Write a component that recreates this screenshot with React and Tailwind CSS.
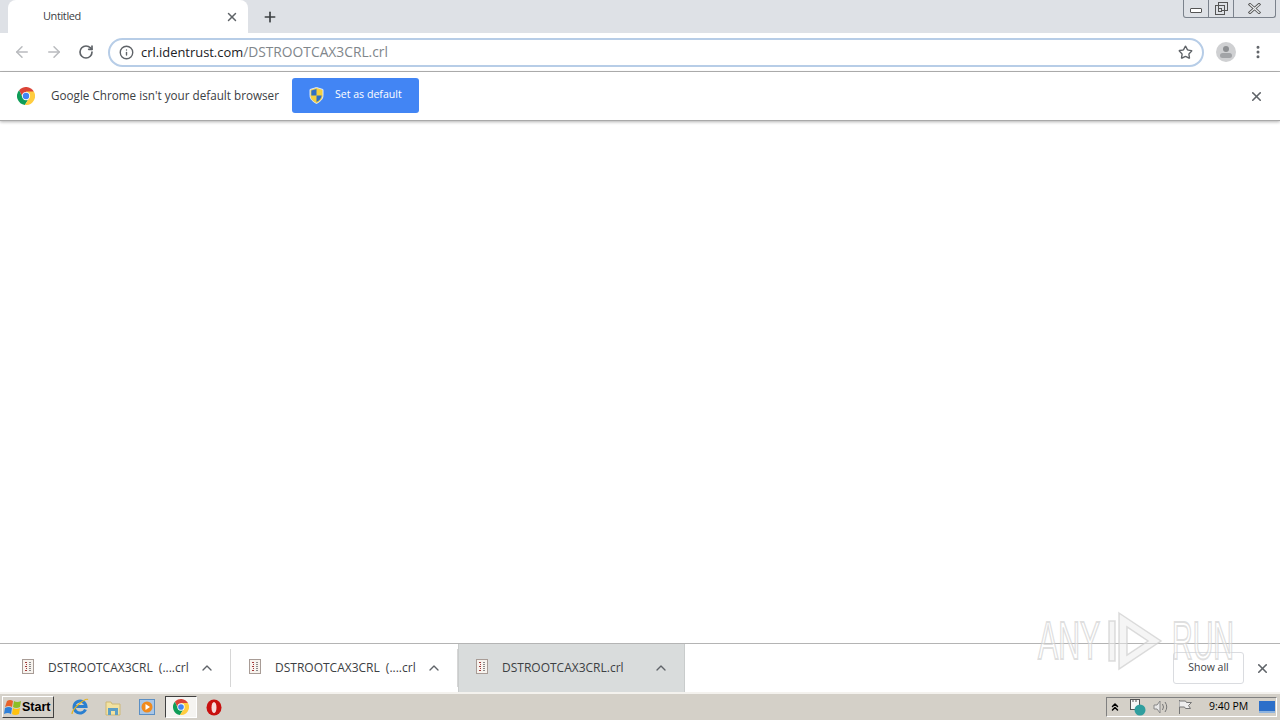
import { ArrowLeft, ArrowRight, RotateCw, Info, Star, X, Plus, ChevronUp, ChevronsUp, EllipsisVertical } from 'lucide-react';

const ChromeLogo = ({ size = 18 }) => (
    <svg width={size} height={size} viewBox="0 0 48 48">
        <path d="M24 24 L44.8 12 A24 24 0 0 0 5.6 8.600 L14 26z" fill="#db4437" />
        <path d="M24 24 L14 26 L5.600 8.600 A24 24 0 0 0 21 47.800 L32 30z" fill="#0f9d58" />
        <path d="M24 24 L32 30 L21 47.800 A24 24 0 0 0 44.800 12 L24 12z" fill="#ffcd40" />
        <circle cx="24" cy="24" r="11" fill="#fff" />
        <circle cx="24" cy="24" r="8.500" fill="#4285f4" />
    </svg>
);

const FileIcon = () => (
    <svg width="14" height="16" viewBox="0 0 14 16">
        <rect x="1.500" y="0.500" width="11" height="14" fill="#f7f3ee" stroke="#a89c96" />
        <path d="M4 3.500h2M5 5.500h1M4 7.500h2M5 9.500h1M4 11.500h2" stroke="#a33b3b" strokeWidth="1" />
        <path d="M8 3.500h2M8 5.500h2M8 7.500h2M8 9.500h2M8 11.500h2" stroke="#8b8b8b" strokeWidth="1" />
    </svg>
);

const Shield = () => (
    <svg width="15" height="17" viewBox="0 0 15 17">
        <path d="M7.500 0.500 L14 2.500 V8.500 C14 12.500 10.500 15 7.500 16.500 C4.500 15 1 12.500 1 8.500 V2.500z" fill="#f4d03f" stroke="#dbe7fb" />
        <path d="M7.500 2 V8.500 H2.300 V3.500z" fill="#2f6fc4" />
        <path d="M7.500 8.500 H12.700 C12.400 11.800 10 13.800 7.500 15z" fill="#2f6fc4" />
    </svg>
);

const DownloadItem = ({ name, active, first }) => (
    <div className={`h-full flex items-center pr-[15px] ${first ? 'w-[231px] pl-[21px]' : active ? 'w-[227px] pl-[16px]' : 'w-[227px] pl-[17px]'} ${active ? 'bg-[#d9dcdc] border-x border-[#c9cccc]' : 'border-r border-[#d6d6d6]'}`}>
        <div className="w-[27px] -mt-[3px] shrink-0"><FileIcon /></div>
        <span className="flex-1 text-xs text-[#3c4043] whitespace-nowrap [word-spacing:3px]">{name}</span>
        <ChevronUp size={16} strokeWidth={2} className="text-[#5f6368]" />
    </div>
);

const App = () => {
    return (
        <div className="relative w-[1280px] h-[720px] overflow-hidden flex flex-col bg-white font-['Open_Sans',sans-serif]">
            {/* Tab strip */}
            <div className="h-[33px] shrink-0 bg-[#dee1e6] flex items-end relative">
                <div className="ml-[8px] w-[240px] h-[33px] bg-white rounded-t-lg flex items-center pl-[35px] pr-[9px]">
                    <span className="flex-1 text-[11px] tracking-[-0.4px] text-[#3c4043]">Untitled</span>
                    <X size={14} strokeWidth={2.5} className="text-[#5f6368]" />
                </div>
                <div className="ml-[14px] h-[33px] flex items-center">
                    <Plus size={16} strokeWidth={2.5} className="text-[#3c4043]" />
                </div>
                {/* window buttons */}
                <div className="absolute top-0 right-[4px] w-[93px] h-[18px] border border-t-0 border-[#7b828c] rounded-b-[3px] flex">
                    <div className="w-[25px] border-r border-[#7b828c] flex items-center justify-center">
                        <div className="w-[12px] h-[5px] border border-[#555] rounded-[1px] bg-white mt-[4px]" />
                    </div>
                    <div className="w-[25px] border-r border-[#7b828c] flex items-end justify-center pb-[2px]">
                        <div className="relative w-[10px] h-[10px] border border-[#555] -ml-[2px]">
                            <div className="absolute -top-[4px] left-[2px] w-[10px] h-[9px] border border-[#555]" />
                            <div className="absolute inset-[2px] border border-[#555] bg-[#dee1e6]" />
                        </div>
                    </div>
                    <div className="flex-1 flex items-center justify-center">
                        <svg width="13" height="11" viewBox="0 0 13 11" fill="none" strokeLinecap="square">
                            <path d="M2 1.500l9 8M11 1.500l-9 8" stroke="#555" strokeWidth="3" />
                            <path d="M2 1.500l9 8M11 1.500l-9 8" stroke="#eef0f2" strokeWidth="1.200" />
                        </svg>
                    </div>
                </div>
            </div>

            {/* Toolbar */}
            <div className="h-[39px] shrink-0 bg-white border-b border-[#b4b4b4] flex items-center">
                <ArrowLeft size={18} className="ml-[13px] text-[#b9bbbe]" />
                <ArrowRight size={18} className="ml-[14px] text-[#b9bbbe]" />
                <RotateCw size={16} strokeWidth={2.5} className="ml-[15px] text-[#5f6368]" />
                <div className="ml-[14px] w-[1096px] h-[29px] rounded-full border-2 border-[#b7cde7] flex items-center pl-[9px] pr-[9px]">
                    <Info size={15} strokeWidth={2.2} className="text-[#5f6368]" />
                    <span className="ml-[7px] flex-1 text-[12.9px] text-[#202124]">crl.identrust.com<span className="text-[13.8px] text-[#80868b]">/DSTROOTCAX3CRL.crl</span></span>
                    <Star size={15} strokeWidth={2.2} className="text-[#5f6368]" />
                </div>
                <div className="ml-[12px] w-[20px] h-[20px] rounded-full bg-[#cfd0d2] flex flex-col items-center justify-center">
                    <div className="w-[6px] h-[6px] rounded-full bg-[#8d8f92]" />
                    <div className="w-[12px] h-[5px] mt-[1px] rounded-full bg-[#a2a4a7]" />
                </div>
                <EllipsisVertical size={16} strokeWidth={2.5} className="ml-[14px] text-[#5f6368]" />
            </div>

            {/* Default browser infobar */}
            <div className="relative z-10 h-[49px] shrink-0 bg-white border-b border-[#a9a9a9] shadow-[0_1px_3px_rgba(0,0,0,0.3)] flex items-center">
                <div className="ml-[17px]"><ChromeLogo /></div>
                <span className="ml-[16px] mb-[1px] text-[11.7px] text-[#3c4043]">Google Chrome isn't your default browser</span>
                <div className="ml-[13px] mb-[2px] w-[127px] h-[35px] bg-[#4285f4] rounded-[3px] flex items-center pl-[17px]">
                    <Shield />
                    <span className="ml-[11px] text-[10.6px] text-white">Set as default</span>
                </div>
                <X size={15} strokeWidth={2.5} className="ml-auto mr-[16px] text-[#5f6368]" />
            </div>

            <div className="flex-1 bg-white" />

            {/* Download shelf */}
            <div className="h-[49px] shrink-0 bg-white border-t border-[#b4b4b4] flex items-center">
                <div className="h-full flex items-center py-[5px]"><DownloadItem first name="DSTROOTCAX3CRL (....crl" /></div>
                <div className="h-full flex items-center py-[5px]"><DownloadItem name="DSTROOTCAX3CRL (....crl" /></div>
                <DownloadItem name="DSTROOTCAX3CRL.crl" active />
                <div className="ml-auto h-[32px] w-[71px] border border-[#dadce0] rounded-[3px] flex items-center justify-center text-[10.5px] text-[#3c4043]">Show all</div>
                <X size={15} strokeWidth={2.5} className="ml-[11px] mr-[10px] text-[#5f6368]" />
            </div>

            {/* Windows taskbar */}
            <div className="h-[28px] shrink-0 bg-[#d4d0c8] border-t-2 border-[#f4f2ee] flex items-center">
                <div className="ml-[2px] w-[52px] h-[22px] bg-[#d4d0c8] border border-t-white border-l-white border-r-[#404040] border-b-[#404040] flex items-center pl-[1px]">
                    <svg width="18" height="17" viewBox="0 0 18 17">
                        <path d="M3 2 Q6 0 9 2 L8 8 Q5 6 1 8z" fill="#e8622a" />
                        <path d="M10 2 Q13 4 17 2 L16 8 Q12 10 9 8z" fill="#8cbf26" />
                        <path d="M1 9 Q5 7 8 9 L7 15 Q4 13 0 15z" fill="#2f80d8" />
                        <path d="M9 9 Q12 11 16 9 L15 15 Q11 17 8 15z" fill="#ffc20e" />
                    </svg>
                    <span className="text-[12.5px] font-bold text-black font-['Liberation_Sans',sans-serif]">Start</span>
                </div>
                {/* quick launch */}
                <svg className="ml-[17px]" width="18" height="18" viewBox="0 0 18 18" fill="none">
                    <path d="M14.500 11.500A6 6 0 1 1 15 8.500H4" stroke="#2a7fd0" strokeWidth="3" />
                    <path d="M1 16 Q1 12 8 6 T17 1.500" stroke="#e6b422" strokeWidth="1.200" />
                </svg>
                <svg className="ml-[16px]" width="16" height="17" viewBox="0 0 16 17">
                    <path d="M1 3h5l1 2h8v11H1z" fill="#f2e2a0" stroke="#cdb877" />
                    <path d="M3 16V9h10v7h-3v-4H6v4z" fill="#5d9fc5" />
                </svg>
                <svg className="ml-[18px]" width="16" height="16" viewBox="0 0 16 16">
                    <rect x="0.500" y="0.500" width="15" height="15" fill="#a9c6e6" stroke="#5b8fc4" />
                    <circle cx="8" cy="8" r="5.500" fill="#f08a1d" />
                    <path d="M6.500 5 L11 8 L6.500 11z" fill="#fff" />
                </svg>
                <div className="ml-[10px] w-[32px] h-[22px] bg-[#f5f4f1] border border-t-[#404040] border-l-[#404040] border-r-white border-b-white flex items-center justify-center">
                    <ChromeLogo size={16} />
                </div>
                <svg className="ml-[9px]" width="16" height="17" viewBox="0 0 16 17">
                    <ellipse cx="8" cy="8.500" rx="7.500" ry="8" fill="#c8100f" />
                    <ellipse cx="8" cy="8.500" rx="2.500" ry="5.500" fill="#f6dcdc" />
                </svg>

                {/* tray */}
                <div className="ml-auto mr-[3px] w-[171px] h-[20px] border border-t-[#808080] border-l-[#808080] border-r-white border-b-white flex items-center">
                    <ChevronsUp size={12} strokeWidth={3} className="ml-[2px] text-black" />
                    <svg className="ml-[8px]" width="18" height="18" viewBox="0 0 18 18">
                        <rect x="1.500" y="1.500" width="9" height="10" fill="#f6f6f6" stroke="#555" />
                        <path d="M4 1v3M7 1v3" stroke="#555" />
                        <circle cx="11" cy="12" r="5.500" fill="#2f9e9e" />
                    </svg>
                    <svg className="ml-[6px]" width="16" height="16" viewBox="0 0 16 16">
                        <path d="M1 6h3l3-4v12l-3-4H1z" fill="#e8e8e8" stroke="#888" />
                        <path d="M9.500 5q2 3 0 6M12 3q3.500 5 0 10" fill="none" stroke="#777" />
                    </svg>
                    <svg className="ml-[8px]" width="16" height="16" viewBox="0 0 16 16">
                        <path d="M2.500 1v14" stroke="#777" />
                        <path d="M2.500 2h6l1 1.500h5l-3 3 2 3h-5l-1-1.500h-5" fill="#eeeeee" stroke="#777" />
                    </svg>
                    <span className="ml-[16px] text-[10.5px] text-black">9:40 PM</span>
                    <svg className="ml-auto mr-[1px]" width="16" height="14" viewBox="0 0 16 14">
                        <rect x="0" y="1" width="16" height="10" fill="#2c6fc9" />
                        <rect x="0" y="11" width="16" height="2" fill="#8fb4df" />
                    </svg>
                </div>
            </div>

            {/* ANY RUN watermark */}
            <div className="absolute left-[1038px] top-[609px] h-[64px] flex items-center pointer-events-none font-['Liberation_Sans',sans-serif] text-[53px] leading-[38px] text-white/40 [-webkit-text-stroke:2px_rgba(205,205,205,0.65)]">
                <span className="block w-[62px] h-[38px] scale-x-[0.57] origin-left whitespace-nowrap">ANY</span>
                <svg className="ml-[7px]" width="58" height="64" viewBox="0 0 58 64" fill="none">
                    <path d="M12 4 L54 32 L12 60z M20 18 V46 L41 32z" fill="rgba(235,235,235,0.5)" fillRule="evenodd" stroke="rgba(205,205,205,0.7)" strokeWidth="1.500" />
                    <path d="M2 12 H8 V52 H2z" fill="rgba(235,235,235,0.5)" stroke="rgba(205,205,205,0.7)" strokeWidth="1.500" />
                </svg>
                <span className="ml-[7px] block w-[62px] h-[38px] scale-x-[0.54] origin-left whitespace-nowrap">RUN</span>
            </div>
        </div>
    );
};

export default App;
